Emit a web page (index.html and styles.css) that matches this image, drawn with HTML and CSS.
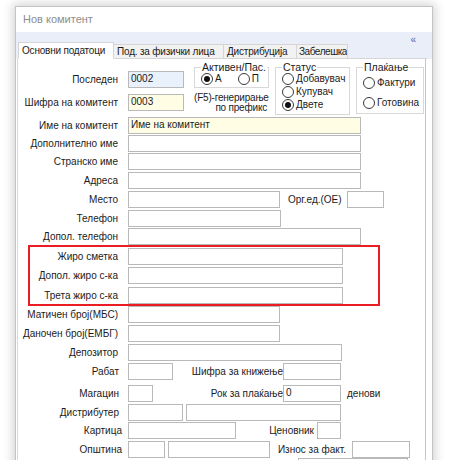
FILE: index.html
```html
<!DOCTYPE html>
<html lang="mk">
<head>
<meta charset="utf-8">
<title>Нов комитент</title>
<link rel="stylesheet" href="styles.css">
</head>
<body>
<div class="window">
  <div class="titlebar">Нов комитент</div>
  <div class="band">
    <div class="tab active">Основни податоци</div>
    <div class="tab t2">Под. за физички лица</div>
    <div class="tab t3">Дистрибуција</div>
    <div class="tab t4">Забелешка</div>
    <div class="tabfill"><span class="collapse">«</span></div>
  </div>
  <div class="panel">
    <div class="top">
      <div class="topleft">
        <div class="row first"><span class="lbl">Последен</span><span class="inp blue w56">0002</span></div>
        <div class="row second"><span class="lbl">Шифра на комитент</span><span class="inp yellow w56">0003</span></div>
      </div>
      <div class="aktcol">
        <fieldset class="grp g-akt">
          <legend>Активен/Пас.</legend>
          <div class="radiorow">
            <span class="radio"><span class="circle on"><span class="dot"></span></span>A</span>
            <span class="radio r-p"><span class="circle"></span>П</span>
          </div>
        </fieldset>
        <div class="f5">(F5)-генерирање<br>по префикс</div>
      </div>
      <fieldset class="grp g-status">
        <legend>Статус</legend>
        <span class="radio line"><span class="circle"></span>Добавувач</span>
        <span class="radio line"><span class="circle"></span>Купувач</span>
        <span class="radio line"><span class="circle on"><span class="dot"></span></span>Двете</span>
      </fieldset>
      <fieldset class="grp g-plak">
        <legend>Плаќање</legend>
        <span class="radio line"><span class="circle"></span>Фактури</span>
        <span class="radio line gap"><span class="circle"></span>Готовина</span>
      </fieldset>
    </div>

    <div class="row m2"><span class="lbl">Име на комитент</span><span class="inp yellow w233">Име на комитент</span></div>
    <div class="row m1"><span class="lbl">Дополнително име</span><span class="inp w233"></span></div>
    <div class="row m1"><span class="lbl">Странско име</span><span class="inp w233"></span></div>
    <div class="row m2"><span class="lbl">Адреса</span><span class="inp w233"></span></div>
    <div class="row m2"><span class="lbl">Место</span><span class="inp w152"></span><span class="lbl2 org">Орг.ед.(ОЕ)</span><span class="inp w37 org-in"></span></div>
    <div class="row m2"><span class="lbl">Телефон</span><span class="inp w153"></span></div>
    <div class="row m1"><span class="lbl">Допол. телефон</span><span class="inp w233"></span></div>

    <div class="giro">
      <div class="row m3"><span class="lbl">Жиро сметка</span><span class="inp w215"></span></div>
      <div class="row m2"><span class="lbl">Допол. жиро с-ка</span><span class="inp w215"></span></div>
      <div class="row m3"><span class="lbl">Трета жиро с-ка</span><span class="inp w215"></span></div>
      <div class="mark"></div>
    </div>

    <div class="row m2"><span class="lbl">Матичен број(МБС)</span><span class="inp w152"></span></div>
    <div class="row m2"><span class="lbl">Даночен број(ЕМБГ)</span><span class="inp w152"></span></div>
    <div class="row m2"><span class="lbl">Депозитор</span><span class="inp w214"></span></div>
    <div class="row m2"><span class="lbl l119">Рабат</span><span class="inp w45"></span><span class="lbl2 kniz">Шифра за книжење</span><span class="inp w58"></span></div>
    <div class="row m5"><span class="lbl l119">Магацин</span><span class="inp w25"></span><span class="lbl2 rok">Рок за плаќање</span><span class="inp w58">0</span><span class="lbl2 den">денови</span></div>
    <div class="row m2"><span class="lbl l119">Дистрибутер</span><span class="inp w55"></span><span class="inp w155 s3"></span></div>
    <div class="row m1"><span class="lbl l122">Картица</span><span class="inp w108"></span><span class="lbl2 cen">Ценовник</span><span class="inp w24"></span></div>
    <div class="row m2"><span class="lbl l122">Општина</span><span class="inp w37"></span><span class="inp w102 s3"></span><span class="lbl2 izn">Износ за факт.</span><span class="inp w58"></span></div>
    <div class="row m0"><span class="inp w110 last"></span></div>
  </div>
</div>
</body>
</html>
```

FILE: styles.css
```css
html, body {
  margin: 0;
  padding: 0;
  background: #ffffff;
}
body {
  font-family: "Liberation Sans", Arial, sans-serif;
  font-size: 10px;
  color: #1b1b1b;
  overflow: hidden;
  height: 460px;
}
.window {
  margin: 6px 0 0 15px;
  width: 418px;
  height: 480px;
  box-sizing: border-box;
  border: 1px solid #c4c4c4;
  background: #fff;
  box-shadow: 0 0 10px 2px rgba(0, 0, 0, 0.18);
}
.titlebar {
  height: 25px;
  line-height: 25px;
  padding-left: 7px;
  color: #8d8d8d;
  font-size: 11px;
}
.band {
  height: 27px;
  box-sizing: border-box;
  background: #e9eef9;
  display: flex;
  align-items: flex-end;
  padding-left: 2px;
  padding-right: 5px;
}
.tab {
  height: 15px;
  box-sizing: border-box;
  border: 1px solid #d5d5d5;
  border-left: none;
  background: #f2f2f2;
  padding-left: 3px;
  line-height: 13px;
  white-space: nowrap;
  overflow: hidden;
  flex: none;
  letter-spacing: -0.2px;
}
.tab.active {
  height: 17px;
  width: 96px;
  background: #ffffff;
  border-left: 1px solid #d5d5d5;
  border-bottom-color: #ffffff;
  line-height: 15px;
}
.t2 { width: 110px; }
.t3 { width: 73px; }
.t4 { width: 51px; padding-left: 2px; letter-spacing: -0.45px; }
.tabfill {
  flex: 1;
  align-self: stretch;
  border-bottom: 1px solid #d5d5d5;
  display: flex;
  justify-content: flex-end;
  align-items: flex-start;
  padding-right: 11px;
}
.collapse {
  color: #5a62a8;
  font-size: 10px;
  line-height: 12px;
  margin-top: 2px;
}
.panel {
  margin-left: 1px;
  width: 409px;
  height: 420px;
  box-sizing: border-box;
  border-left: 1px solid #d9d9d9;
  border-right: 1px solid #c6c6c6;
}
.top {
  height: 56px;
  display: flex;
  align-items: flex-start;
}
.topleft {
  width: 166px;
  flex: none;
}
.row {
  display: flex;
  align-items: center;
  height: 17px;
}
.row.first { margin-top: 12px; }
.row.second { margin-top: 6px; }
.m0 { margin-top: 0; }
.m1 { margin-top: 1px; }
.m2 { margin-top: 2px; }
.m3 { margin-top: 3px; }
.m5 { margin-top: 5px; }
.lbl {
  width: 100px;
  flex: none;
  text-align: right;
  white-space: nowrap;
  margin-right: 10px;
}
.lbl.l119 { width: 101px; margin-right: 9px; }
.lbl.l122 { width: 104px; margin-right: 6px; }
.lbl2 {
  white-space: nowrap;
  flex: none;
}
.inp {
  flex: none;
  height: 17px;
  box-sizing: border-box;
  border: 1px solid #b9b9b9;
  background: #ffffff;
  padding: 0 2px;
  line-height: 14px;
  white-space: nowrap;
  overflow: hidden;
}
.blue { background: #e9f1fd; }
.yellow { background: #fffde3; }
.w24 { width: 24px; }
.w25 { width: 25px; }
.w37 { width: 37px; }
.w45 { width: 45px; }
.w55 { width: 55px; }
.w56 { width: 56px; }
.w58 { width: 58px; }
.w102 { width: 102px; }
.w108 { width: 108px; }
.w110 { width: 110px; }
.w152 { width: 152px; }
.w153 { width: 153px; }
.w155 { width: 155px; }
.w214 { width: 214px; }
.w215 { width: 215px; }
.w233 { width: 233px; }
.s3 { margin-left: 3px; }
.org { margin-left: 8px; width: 53px; }
.org-in { margin-left: 6px; }
.kniz { margin-left: 18px; width: 92px; text-align: right; }
.rok { margin-left: 54px; width: 76px; text-align: right; }
.den { margin-left: 6px; }
.cen { margin-left: 33px; width: 45px; text-align: right; margin-right: 3px; }
.izn { margin-left: 6px; width: 70px; text-align: right; margin-right: 6px; }
.last { margin-left: 280px; }

/* group boxes */
.grp {
  margin: 2px 0 0 0;
  padding: 0 0 0 6px;
  border: 1px solid #d8d8d8;
  box-sizing: border-box;
  min-width: 0;
  flex: none;
  overflow: visible;
}
.grp legend {
  padding: 0 1px;
  margin-left: 0;
  line-height: 12px;
  font-size: 10.5px;
}
.aktcol {
  width: 75px;
  flex: none;
  margin-left: 10px;
}
.g-akt {
  width: 75px;
  height: 27px;
  margin-top: 2px;
}
.radiorow {
  display: flex;
  margin-top: -1px;
}
.radio {
  display: flex;
  align-items: center;
  height: 13px;
  white-space: nowrap;
  font-size: 10px;
}
.g-status .radio.line:first-of-type { margin-top: -1px; }
.r-p { margin-left: 16px; }
.circle {
  width: 12px;
  height: 12px;
  box-sizing: border-box;
  border: 1px solid #3a3a3a;
  border-radius: 50%;
  background: #fff;
  margin-right: 2px;
  display: flex;
  align-items: center;
  justify-content: center;
  flex: none;
}
.dot {
  width: 6px;
  height: 6px;
  border-radius: 50%;
  background: #111;
}
.f5 {
  margin-top: 5px;
  text-align: right;
  padding-right: 2px;
  line-height: 10px;
  font-size: 10px;
  white-space: nowrap;
  letter-spacing: -0.2px;
}
.g-status {
  width: 75px;
  height: 54px;
  margin-left: 6px;
}
.g-plak {
  width: 68px;
  height: 53px;
  margin-left: 6px;
}
.g-plak .radio.line:first-of-type { margin-top: 3px; }
.g-plak .radio.gap { margin-top: 7px; }

/* annotation around giro rows */
.giro {
  position: relative;
}
.mark {
  position: absolute;
  left: 10px;
  top: -3px;
  width: 352px;
  height: 61px;
  box-sizing: border-box;
  border: 2px solid #ea1c24;
  pointer-events: none;
}
```
